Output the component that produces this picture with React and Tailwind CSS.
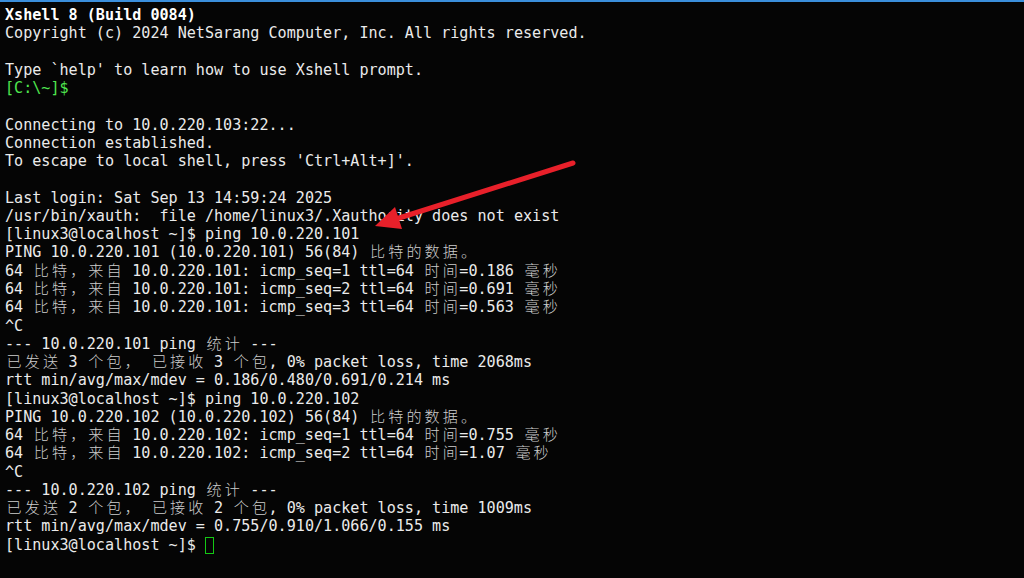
import React from 'react';

const lines = [
  { text: 'Xshell 8 (Build 0084)', bold: true },
  { text: 'Copyright (c) 2024 NetSarang Computer, Inc. All rights reserved.' },
  { text: '' },
  { text: "Type `help' to learn how to use Xshell prompt." },
  { text: '[C:\\~]$', green: true },
  { text: '' },
  { text: 'Connecting to 10.0.220.103:22...' },
  { text: 'Connection established.' },
  { text: "To escape to local shell, press 'Ctrl+Alt+]'." },
  { text: '' },
  { text: 'Last login: Sat Sep 13 14:59:24 2025' },
  { text: '/usr/bin/xauth:  file /home/linux3/.Xauthority does not exist' },
  { text: '[linux3@localhost ~]$ ping 10.0.220.101' },
  { text: 'PING 10.0.220.101 (10.0.220.101) 56(84) 比特的数据。' },
  { text: '64 比特，来自 10.0.220.101: icmp_seq=1 ttl=64 时间=0.186 毫秒' },
  { text: '64 比特，来自 10.0.220.101: icmp_seq=2 ttl=64 时间=0.691 毫秒' },
  { text: '64 比特，来自 10.0.220.101: icmp_seq=3 ttl=64 时间=0.563 毫秒' },
  { text: '^C' },
  { text: '--- 10.0.220.101 ping 统计 ---' },
  { text: '已发送 3 个包， 已接收 3 个包, 0% packet loss, time 2068ms' },
  { text: 'rtt min/avg/max/mdev = 0.186/0.480/0.691/0.214 ms' },
  { text: '[linux3@localhost ~]$ ping 10.0.220.102' },
  { text: 'PING 10.0.220.102 (10.0.220.102) 56(84) 比特的数据。' },
  { text: '64 比特，来自 10.0.220.102: icmp_seq=1 ttl=64 时间=0.755 毫秒' },
  { text: '64 比特，来自 10.0.220.102: icmp_seq=2 ttl=64 时间=1.07 毫秒' },
  { text: '^C' },
  { text: '--- 10.0.220.102 ping 统计 ---' },
  { text: '已发送 2 个包， 已接收 2 个包, 0% packet loss, time 1009ms' },
  { text: 'rtt min/avg/max/mdev = 0.755/0.910/1.066/0.155 ms' },
  { text: '[linux3@localhost ~]$ ', cursor: true },
];

// wide chars take two terminal cells: 1em glyph + 2 x 1.54px padding
function Cells({ text }) {
  const parts = text.split(/([\u3000-\u9fff\uff00-\uffef])/);
  return parts.map((p, i) =>
    i % 2 === 1 ? (
      <span
        key={i}
        className="px-[1.54px] leading-[0] text-[#cdcdcd] [font-family:'Noto_Sans_CJK_SC',sans-serif] font-light"
      >
        {p}
      </span>
    ) : (
      <span key={i}>{p}</span>
    )
  );
}

function App() {
  return (
    <div className="relative w-[1024px] h-[578px] bg-[#050505] overflow-hidden">
      <div className="h-[2px] bg-[#3b8fdc]" />

      <div className="pt-[4px] pl-[5px] text-[15.1px] leading-[18.27px] text-[#ebebeb] whitespace-pre [font-family:'DejaVu_Sans_Mono',monospace]">
        {lines.map((l, i) => (
          <div
            key={i}
            className={
              'h-[18.27px] ' +
              (l.bold ? 'font-bold text-white' : l.green ? 'text-[#4fe64f]' : '')
            }
          >
            {l.text ? <Cells text={l.text} /> : '\u00a0'}
            {l.cursor && (
              <span className="inline-flex align-top w-[9px] h-[17px] mt-[1px] p-[1px] bg-[#14c814]">
                <span className="flex-1 bg-[#050505]" />
              </span>
            )}
          </div>
        ))}
      </div>

      {/* annotation arrow */}
      <svg
        className="absolute left-0 top-0 pointer-events-none"
        width="1024"
        height="578"
      >
        <line
          x1="573"
          y1="163"
          x2="396"
          y2="219"
          stroke="#e8202a"
          strokeWidth="5"
          strokeLinecap="round"
        />
        <polygon points="375,226 402,229 395,207" fill="#e8202a" />
      </svg>
    </div>
  );
}

export default App;
